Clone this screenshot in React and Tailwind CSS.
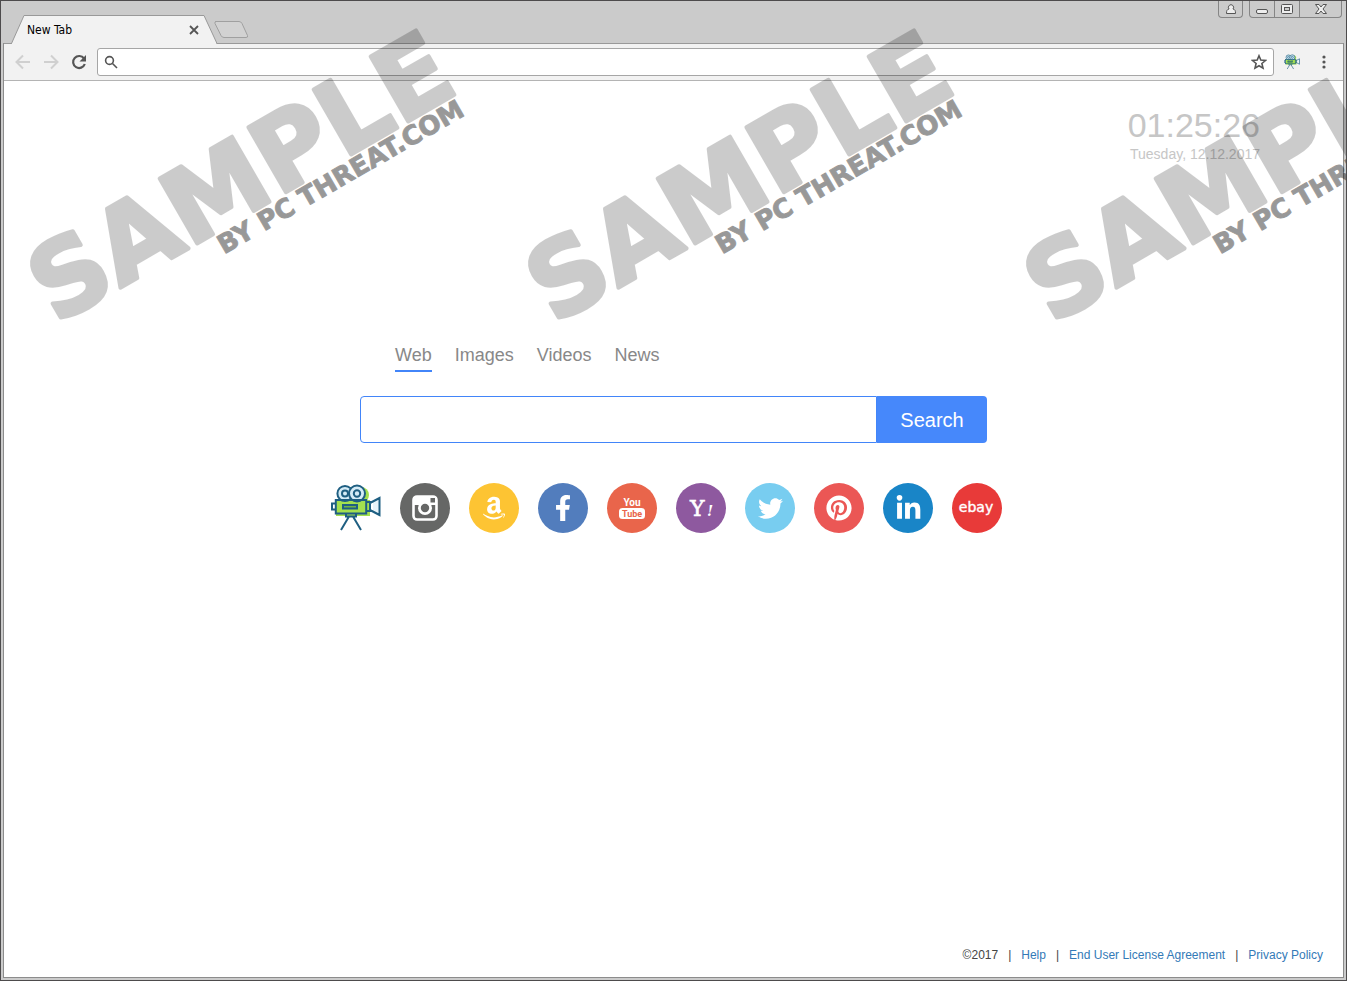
import React from 'react';
import { FaAmazon, FaFacebookF, FaTwitter, FaPinterest, FaLinkedinIn } from 'react-icons/fa';

const tabs = ['Web', 'Images', 'Videos', 'News'];

const CameraIcon = ({ className }) => (
    <svg viewBox="0 0 50 50" className={className} fill="none" stroke="#1f5f82" strokeWidth="2">
        <g fill="#a3e04f" stroke="none">
            <rect x="5" y="17" width="34" height="16" />
            <circle cx="17" cy="12" r="8" />
            <circle cx="30" cy="12" r="8" />
            <path d="M42 18l6-3v18l-6-3z" fill="#e8f4fa" />
        </g>
        <circle cx="14" cy="10.500" r="7.600" fill="#d5ecf7" />
        <circle cx="14" cy="10.500" r="3" />
        <circle cx="26" cy="10.500" r="8" fill="#d5ecf7" />
        <circle cx="26" cy="10.500" r="3.200" />
        <rect x="4.800" y="17" width="30.400" height="13.500" />
        <rect x="12" y="22" width="14" height="3.500" fill="#71b345" />
        <path d="M5 20.500H1v6h4M35 19h4v9h-4M39 20l9.500-5v17l-9.500-5M15 30.500v3h10v-3M18 33.500L10 47M22 33.500L30 47" />
    </svg>
);

const InstagramIcon = () => (
    <svg viewBox="0 0 50 50" className="size-full">
        <rect x="13.500" y="13.500" width="23" height="23" rx="3.500" fill="none" stroke="#fff" strokeWidth="2.600" />
        <path d="M13 14h24v8H13z" fill="#fff" />
        <rect x="30.500" y="15" width="4.500" height="4.500" fill="#666766" />
        <circle cx="25" cy="25" r="5.600" fill="#666766" stroke="#fff" strokeWidth="2.800" />
    </svg>
);

const YoutubeIcon = () => (
    <svg viewBox="0 0 50 50" className="size-full" fontFamily="Roboto, sans-serif" fontWeight="700" textAnchor="middle">
        <rect x="12" y="25" width="26" height="11" rx="3.500" fill="#fff" />
        <text x="25" y="23" fontSize="10" fill="#fff">You</text>
        <text x="25" y="34" fontSize="9" fill="#e9654b">Tube</text>
    </svg>
);

const YahooIcon = () => (
    <svg viewBox="0 0 50 50" className="size-full" fill="#fff" fontFamily="'DejaVu Serif', serif">
        <text x="14" y="33" fontSize="22" stroke="#fff" strokeWidth="0.600">Y</text>
        <text x="31" y="33" fontSize="14" fontWeight="700" fontStyle="italic">!</text>
    </svg>
);

const EbayIcon = () => (
    <svg viewBox="0 0 50 50" className="size-full" fill="#fff" fontFamily="'DejaVu Sans', sans-serif">
        <text x="24" y="29" fontSize="14" textAnchor="middle" stroke="#fff" strokeWidth="0.400">ebay</text>
    </svg>
);

const shortcuts = [
    { name: 'Movies', color: '', icon: <CameraIcon className="size-full" /> },
    { name: 'Instagram', color: 'bg-[#666766]', icon: <InstagramIcon /> },
    { name: 'Amazon', color: 'bg-[#fdc433]', icon: <FaAmazon className="size-[26px]" /> },
    { name: 'Facebook', color: 'bg-[#527dbd]', icon: <FaFacebookF className="size-[26px]" /> },
    { name: 'YouTube', color: 'bg-[#e9654b]', icon: <YoutubeIcon /> },
    { name: 'Yahoo', color: 'bg-[#8e599f]', icon: <YahooIcon /> },
    { name: 'Twitter', color: 'bg-[#78cdf0]', icon: <FaTwitter className="size-[25px]" /> },
    { name: 'Pinterest', color: 'bg-[#eb5755]', icon: <FaPinterest className="size-[26px]" /> },
    { name: 'LinkedIn', color: 'bg-[#1985c7]', icon: <FaLinkedinIn className="size-[27px]" /> },
    { name: 'eBay', color: 'bg-[#e83a39]', icon: <EbayIcon /> },
];

const WindowButtons = () => (
    <div className="flex items-start gap-1.5 pr-0.5">
        <button aria-label="Profile" className="flex h-[17px] w-[25px] items-center justify-center rounded-b-[4px] border border-t-0 border-[#858585]">
            <svg viewBox="0 0 12 12" className="size-3" fill="#eee" stroke="#555">
                <path d="M4 6a2.600 2.600 0 1 1 4 0c2 .5 2.500 1.500 2.500 4.500h-9C1.500 7.500 2 6.500 4 6z" />
            </svg>
        </button>
        <div className="flex h-[17px] rounded-b-[4px] border border-t-0 border-[#858585]">
            <button aria-label="Minimize" className="flex w-[25px] items-center justify-center border-r border-[#858585]">
                <svg viewBox="0 0 12 12" className="size-3" fill="#eee" stroke="#555">
                    <rect x="0.500" y="6.500" width="11" height="4" rx="1.500" />
                </svg>
            </button>
            <button aria-label="Maximize" className="flex w-[25px] items-center justify-center border-r border-[#858585]">
                <svg viewBox="0 0 12 12" className="size-3" fill="#eee" stroke="#555">
                    <rect x="0.500" y="1.500" width="11" height="9" rx="1" />
                    <rect x="3.500" y="4.500" width="5" height="3" fill="#ccc" />
                </svg>
            </button>
            <button aria-label="Close" className="flex w-[41px] items-center justify-center">
                <svg viewBox="0 0 12 12" className="size-3" fill="#eee" stroke="#555">
                    <path d="M.5 1.500H4L6 4l2-2.500h3.500L8 6l3.500 4.500H8L6 8l-2 2.500H.5L4 6z" />
                </svg>
            </button>
        </div>
    </div>
);

const TitleBar = () => (
    <div className="flex h-[42px] justify-between bg-[#cbcbcb]">
        <div className="flex items-end pl-1.5">
            <div className="relative flex h-7 w-[208px] items-center justify-between px-[18px] pt-0.5">
                <svg viewBox="0 0 208 29" className="absolute top-0 left-0 h-[29px] w-[208px]">
                    <path d="M0 28.500H2.500L15 .5H195L208 28.500" fill="#f2f2f2" stroke="#999" />
                    <path d="M3 28.500H207" stroke="#f2f2f2" />
                </svg>
                <span className="relative font-['DejaVu_Sans_Condensed','Noto_Sans',sans-serif] text-[12px] leading-4 text-black">New Tab</span>
                <button aria-label="Close tab" className="relative flex size-2.5 items-center justify-center">
                    <svg viewBox="0 0 10 10" className="size-2.5" stroke="#555" strokeWidth="1.800">
                        <path d="M1 1l8 8M9 1L1 9" />
                    </svg>
                </button>
            </div>
            <button aria-label="New tab" className="mb-1 ml-[-4px] h-[18px] w-9">
                <svg viewBox="0 0 36 18" className="h-[18px] w-9" fill="#d2d2d2" stroke="#a0a0a0">
                    <path d="M2.500 .5H26q2 0 3 2l5.500 12q.8 2-1.500 2H11q-2 0-3-2L2 2.500Q1.500.5 3 .5z" />
                </svg>
            </button>
        </div>
        <WindowButtons />
    </div>
);

const Toolbar = () => (
    <div className="flex h-[38px] items-center border-t border-b border-t-[#999] border-b-[#b4b4b4] bg-[#f2f2f2] px-[11px]">
        <div className="flex items-center gap-3 pr-2.5">
            <button aria-label="Back">
                <svg viewBox="0 0 16 16" className="size-4" fill="none" stroke="#d0d0d0" strokeWidth="2">
                    <path d="M15 8H2M8 1.500L1.500 8 8 14.500" />
                </svg>
            </button>
            <button aria-label="Forward">
                <svg viewBox="0 0 16 16" className="size-4" fill="none" stroke="#d0d0d0" strokeWidth="2">
                    <path d="M1 8h13M8 1.500L14.500 8 8 14.500" />
                </svg>
            </button>
            <button aria-label="Reload">
                <svg viewBox="0 0 16 16" className="size-4" fill="none" stroke="#555" strokeWidth="2.200">
                    <path d="M13 4.500A6 6 0 1 0 13.800 10" />
                    <path d="M15 1v6.500H8.500z" fill="#555" stroke="none" />
                </svg>
            </button>
        </div>
        <div className="flex h-7 flex-1 items-center rounded-[3px] border border-[#a6a6a6] bg-white px-1.5">
            <svg viewBox="0 0 14 14" className="size-3.5" fill="none" stroke="#555" strokeWidth="1.600">
                <circle cx="5.500" cy="5.500" r="3.900" />
                <path d="M8.500 8.500L13 13" />
            </svg>
            <input aria-label="Address" className="h-full flex-1 px-2 text-sm outline-none" />
            <button aria-label="Bookmark">
                <svg viewBox="0 0 16 16" className="size-4" fill="none" stroke="#555" strokeWidth="1.600">
                    <path d="M8 1.800l1.800 4.300 4.700.4-3.600 3 1.100 4.600L8 11.700l-4 2.400 1.100-4.600-3.600-3 4.700-.4z" />
                </svg>
            </button>
        </div>
        <button aria-label="Extension" className="ml-2.5">
            <CameraIcon className="size-4" />
        </button>
        <button aria-label="Menu" className="ml-4">
            <svg viewBox="0 0 16 16" className="size-4" fill="#555">
                <circle cx="8" cy="3" r="1.600" />
                <circle cx="8" cy="8" r="1.600" />
                <circle cx="8" cy="13" r="1.600" />
            </svg>
        </button>
    </div>
);

// The third stamp runs off the right edge of the window
const Watermark = () => (
    <svg className="pointer-events-none absolute inset-0 size-full" fontFamily="'DejaVu Sans', sans-serif" fontWeight="700" strokeLinejoin="round" stroke="#000">
        {[0, 498, 996].map((x) => (
            <g key={x} transform={`translate(${x} 0) rotate(-30 54 321)`}>
                <text x="53" y="324" fontSize="103" strokeWidth="4" opacity="0.2">SAMPLE</text>
                <text x="234" y="347" fontSize="26" strokeWidth="1" opacity="0.4">BY PC THREAT.COM</text>
            </g>
        ))}
    </svg>
);

const Footer = () => (
    <footer className="flex justify-end gap-2.5 pr-5 pb-3 text-[12px] leading-5 text-[#444]">
        <span>©2017</span>
        <span>|</span>
        <a href="#help" className="text-[#337ab7]">Help</a>
        <span>|</span>
        <a href="#eula" className="text-[#337ab7]">End User License Agreement</a>
        <span>|</span>
        <a href="#privacy" className="text-[#337ab7]">Privacy Policy</a>
    </footer>
);

export default function App() {
    return (
        <div className="relative flex min-h-screen flex-col overflow-hidden border border-[#4d4b4c] bg-[#cbcbcb] px-0.5 pb-0.5 font-['Liberation_Sans',Arial,sans-serif]">
            <TitleBar />
            <div className="flex flex-1 flex-col border border-t-0 border-[#8c8c8c] bg-white">
                <Toolbar />
                <main className="flex flex-1 flex-col">
                    <div className="self-end pt-6 pr-[83px] text-right text-[#c6c6c6]">
                        <div className="text-[34px] leading-10">01:25:26</div>
                        <div className="text-[14px] leading-[18px]">Tuesday, 12.12.2017</div>
                    </div>
                    <div className="mx-auto mt-[182px] w-full max-w-[627px]">
                        <nav className="flex gap-[23px] pl-[35px] text-[18px] leading-5 text-[#888]">
                            {tabs.map((tab) => (
                                <a key={tab} href={`#${tab.toLowerCase()}`} className={tab === 'Web' ? 'border-b-2 border-[#4285f9] pb-[5px]' : 'pb-[7px]'}>
                                    {tab}
                                </a>
                            ))}
                        </nav>
                        <form className="mt-6 flex h-[47px]">
                            <input aria-label="Search the web" className="min-w-0 flex-1 rounded-l-[4px] border border-[#4285f9] px-3 text-lg outline-none" />
                            <button type="button" className="w-[110px] rounded-r-[4px] bg-[#4688fb] text-[20px] text-white">Search</button>
                        </form>
                    </div>
                    <div className="mt-10 flex justify-center gap-[19px] pr-3.5">
                        {shortcuts.map(({ name, color, icon }) => (
                            <a key={name} href={`#${name.toLowerCase()}`} aria-label={name} className={`flex size-[50px] items-center justify-center rounded-full text-white ${color}`}>
                                {icon}
                            </a>
                        ))}
                    </div>
                    <div className="flex-1" />
                    <Footer />
                </main>
            </div>
            <Watermark />
        </div>
    );
}
